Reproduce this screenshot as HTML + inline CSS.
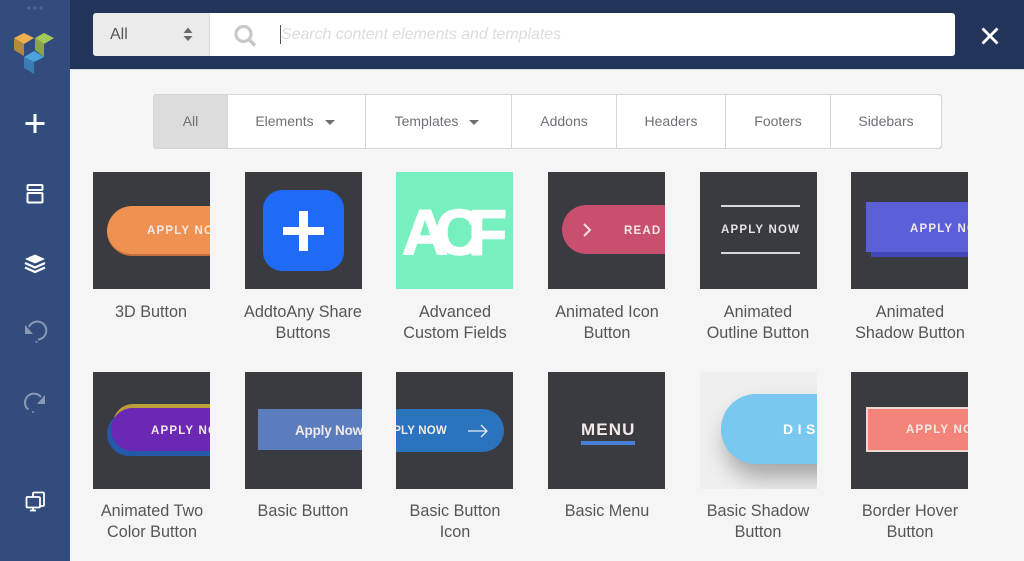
<!DOCTYPE html>
<html>
<head>
<meta charset="utf-8">
<style>
html,body{margin:0;padding:0;width:1024px;height:561px;overflow:hidden;background:#f5f5f5;font-family:"Liberation Sans",sans-serif}
*{box-sizing:border-box}
.abs,.side,.top,.tile,.tile div,.lab,.tab{position:absolute}
.side{left:0;top:0;width:70px;height:561px;background:#324c7d}
.top{left:70px;top:0;width:954px;height:70px;background:#22345a;border-bottom:1px solid #dcdde0}
.tile{width:117px;height:117px;background:#3a3b40;overflow:hidden}
.t{position:absolute;font-weight:bold;color:#f3e9e6;white-space:nowrap;font-size:11.5px;letter-spacing:1.2px;line-height:12px}
.lab{width:140px;text-align:center;font-size:16.2px;line-height:21px;color:#555659;white-space:nowrap}
.tab{top:95px;height:53px;background:#fff;border-right:1px solid #d6d6d6;font-size:14px;line-height:52px;color:#6d7075;text-align:center}
.caret{display:inline-block;width:0;height:0;border-left:5.5px solid transparent;border-right:5.5px solid transparent;border-top:5.5px solid #6d7075;margin-left:11px;vertical-align:1px}
</style>
</head>
<body>
<div class="side"></div>
<div class="top"></div>

<svg class="abs" style="left:0;top:0" width="70" height="561" viewBox="0 0 70 561">
<g fill="#4e678f"><circle cx="29" cy="8" r="1.6"/><circle cx="35" cy="8" r="1.6"/><circle cx="41" cy="8" r="1.6"/></g>
<polygon points="14,38 24,33 34,38 24,44" fill="#eeb04e"/>
<polygon points="14,38 24,44 24,56 14,50" fill="#b28a3f"/>
<polygon points="35,38 44,33 54,38 44,44" fill="#a6c85b"/>
<polygon points="35,38 44,44 44,57 35,50" fill="#88a54c"/>
<polygon points="24,57 34,51 44,57 34,62" fill="#4aa3dc"/>
<polygon points="24,57 34,62 34,74 24,68" fill="#3d7bb4"/>
<path d="M35 114v19M25.500 123.500h19" stroke="#fff" stroke-width="3" fill="none"/>
<g fill="none" stroke="#fff" stroke-width="2">
<rect x="27.500" y="185" width="15" height="5" rx="1"/>
<rect x="27.500" y="193" width="15" height="9.500" rx="1"/>
</g>
<polygon points="35,254.500 45,259 35,263.500 25,259" fill="#fff"/>
<path d="M25 263l10 4.500 10-4.500M25 267.500l10 4.500 10-4.500" fill="none" stroke="#fff" stroke-width="2.300"/>
<g fill="none" stroke="#8a9ab5" stroke-width="2">
<path d="M29 327a9 9 0 1 1 9 12.500"/>
<path d="M41 397a9 9 0 0 0-16 6c0 3 1.500 5 3.500 6.500"/>
</g>
<polygon points="25,325 25,334 33,334" fill="#8a9ab5"/>
<polygon points="45,395 45,404 37,404" fill="#8a9ab5"/>
<circle cx="36.500" cy="342" r="1" fill="#8a9ab5"/>
<circle cx="33" cy="412" r="1" fill="#8a9ab5"/>
<g fill="none" stroke="#fff" stroke-width="1.800">
<rect x="26.500" y="497" width="13.500" height="10.500" rx="1"/>
<path d="M33 497v-3.500a1 1 0 0 1 1-1h9a1 1 0 0 1 1 1v11.500a1 1 0 0 1-1 1h-3"/>
<path d="M30 510.500h6M33 507.500v3"/>
</g>
</svg>

<div class="abs" style="left:93px;top:13px;width:117px;height:43px;background:#ebebeb;border-radius:3px 0 0 3px;border-right:1px solid #dcdcdc;font-size:16px;line-height:44px;color:#555;padding-left:17px">All</div>
<div class="abs" style="left:210px;top:13px;width:745px;height:43px;background:#fff;border-radius:0 3px 3px 0"></div>
<svg class="abs" style="left:183px;top:26px" width="10" height="16"><polygon points="5,1.500 9.500,7 .5,7" fill="#6a6a6a"/><polygon points="5,15 9.500,10 .5,10" fill="#6a6a6a"/></svg>
<svg class="abs" style="left:233px;top:24px" width="24" height="24"><circle cx="10.500" cy="10" r="7.500" fill="none" stroke="#c8c8c8" stroke-width="3.200"/><path d="M16 15.500l6 6" stroke="#c8c8c8" stroke-width="3.500"/></svg>
<div class="abs" style="left:280px;top:25px;width:1px;height:19px;background:#555"></div>
<div class="abs" style="left:281px;top:25px;font-size:15.900px;line-height:20px;font-style:italic;color:#dcdcdc;white-space:nowrap">Search content elements and templates</div>
<svg class="abs" style="left:980px;top:26px" width="20" height="20"><path d="M2.500 2.500l15 15M17.500 2.500l-15 15" stroke="#fff" stroke-width="2.800"/></svg>

<div class="abs" style="left:153px;top:94px;width:789px;height:55px;background:#d6d6d6;border-radius:3px"></div>
<div class="tab" style="left:154px;width:74px;background:#dcdcdc;border-radius:3px 0 0 3px">All</div>
<div class="tab" style="left:228px;width:138px;padding-right:3px">Elements<span class="caret"></span></div>
<div class="tab" style="left:366px;width:146px;padding-right:3px">Templates<span class="caret"></span></div>
<div class="tab" style="left:512px;width:105px">Addons</div>
<div class="tab" style="left:617px;width:109px">Headers</div>
<div class="tab" style="left:726px;width:105px">Footers</div>
<div class="tab" style="left:831px;width:110px;border-right:0;border-radius:0 3px 3px 0">Sidebars</div>

<!-- Row 1 -->
<div class="tile" style="left:93px;top:172px">
<div style="left:14px;top:34px;width:140px;height:50px;border-radius:25px;background:#ef9150;border-bottom:2px solid #c5703f"></div>
<span class="t" style="left:54px;top:53px">APPLY NOW</span>
</div>
<div class="tile" style="left:245px;top:172px">
<div style="left:18px;top:18px;width:81px;height:81px;border-radius:19px;background:#1f6bf5"></div>
<div style="left:38px;top:55px;width:41px;height:8px;background:#fff"></div>
<div style="left:54px;top:39px;width:9px;height:40px;background:#fff"></div>
</div>
<div class="tile" style="left:396px;top:172px;background:#76f0bf">
<svg width="117" height="117" style="position:absolute;left:0;top:0"><g font-family="Liberation Sans" font-weight="bold" font-size="64" fill="#fff" stroke="#fff" stroke-width="1.500"><text x="6" y="82.500">A</text><text x="39" y="82.500">C</text><text x="72" y="82.500">F</text></g></svg>
</div>
<div class="tile" style="left:548px;top:172px">
<div style="left:14px;top:33px;width:140px;height:49px;border-radius:25px;background:#c94f6f"></div>
<svg width="14" height="16" style="position:absolute;left:33px;top:50px"><path d="M3 2l6 6-6 6" fill="none" stroke="#f6dde3" stroke-width="2"/></svg>
<span class="t" style="left:76px;top:53px">READ</span>
</div>
<div class="tile" style="left:700px;top:172px">
<div style="left:21px;top:33px;width:79px;height:2px;background:#d8d8d8"></div>
<div style="left:21px;top:80px;width:79px;height:2px;background:#d8d8d8"></div>
<span class="t" style="left:21px;top:52px;color:#e4e4e4">APPLY NOW</span>
</div>
<div class="tile" style="left:851px;top:172px">
<div style="left:20px;top:35px;width:120px;height:50px;background:#4348b8"></div>
<div style="left:15px;top:30px;width:120px;height:50px;background:#5b60d8"></div>
<span class="t" style="left:59px;top:51px">APPLY NOW</span>
</div>

<!-- Row 2 -->
<div class="tile" style="left:93px;top:372px">
<div style="left:20px;top:32px;width:140px;height:40px;border-radius:22px;background:#b9a03a"></div>
<div style="left:14px;top:40px;width:140px;height:44px;border-radius:22px;background:#2458a8"></div>
<div style="left:18px;top:36px;width:140px;height:43px;border-radius:22px;background:#6a28b4"></div>
<span class="t" style="left:58px;top:53px">APPLY NOW</span>
</div>
<div class="tile" style="left:245px;top:372px">
<div style="left:13px;top:37px;width:120px;height:41px;background:#5b7dbd"></div>
<span class="t" style="left:50px;top:51px;font-size:13.500px;letter-spacing:-.2px;line-height:15px">Apply Now</span>
</div>
<div class="tile" style="left:396px;top:372px">
<div style="left:-40px;top:37px;width:148px;height:43px;border-radius:22px;background:#2b73bd"></div>
<span class="t" style="right:66px;top:53px;letter-spacing:.2px">PLY NOW</span>
<svg width="22" height="14" style="position:absolute;left:71px;top:52px"><path d="M1 7h19M14 1l6 6-6 6" fill="none" stroke="#e8eef6" stroke-width="1.300"/></svg>
</div>
<div class="tile" style="left:548px;top:372px">
<span class="t" style="left:33px;top:50px;font-size:17px;letter-spacing:1.100px;line-height:16px">MENU</span>
<div style="left:33px;top:69px;width:54px;height:4px;background:#4a7fd6"></div>
</div>
<div class="tile" style="left:700px;top:372px;background:#efefef">
<div style="left:21px;top:22px;width:140px;height:70px;border-radius:35px;background:#78c8f0;box-shadow:4px 14px 22px rgba(0,0,0,.3)"></div>
<span class="t" style="left:83px;top:50px;font-size:14px;letter-spacing:4.500px;line-height:14px;color:#fff">DIS</span>
</div>
<div class="tile" style="left:851px;top:372px">
<div style="left:15px;top:35px;width:130px;height:45px;background:#f4847a;border:2px solid #ecd9d3"></div>
<span class="t" style="left:55px;top:52px">APPLY NOW</span>
</div>

<!-- Labels -->
<div class="lab" style="left:81px;top:302px">3D Button</div>
<div class="lab" style="left:233px;top:302px">AddtoAny Share<br>Buttons</div>
<div class="lab" style="left:385px;top:302px">Advanced<br>Custom Fields</div>
<div class="lab" style="left:537px;top:302px">Animated Icon<br>Button</div>
<div class="lab" style="left:688px;top:302px">Animated<br>Outline Button</div>
<div class="lab" style="left:840px;top:302px">Animated<br>Shadow Button</div>
<div class="lab" style="left:82px;top:501px">Animated Two<br>Color Button</div>
<div class="lab" style="left:233px;top:501px">Basic Button</div>
<div class="lab" style="left:385px;top:501px">Basic Button<br>Icon</div>
<div class="lab" style="left:537px;top:501px">Basic Menu</div>
<div class="lab" style="left:688px;top:501px">Basic Shadow<br>Button</div>
<div class="lab" style="left:840px;top:501px">Border Hover<br>Button</div>
</body>
</html>
